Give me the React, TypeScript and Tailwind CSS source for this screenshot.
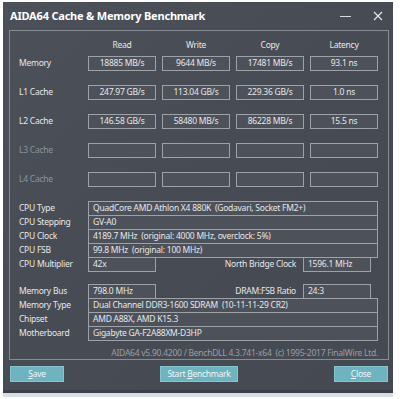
import React from 'react';

const font = "font-['Noto_Sans','Open_Sans',sans-serif]";

const benchRows = [
  { label: 'Memory', vals: ['18885 MB/s', '9644 MB/s', '17481 MB/s', '93.1 ns'] },
  { label: 'L1 Cache', vals: ['247.97 GB/s', '113.04 GB/s', '229.36 GB/s', '1.0 ns'] },
  { label: 'L2 Cache', vals: ['146.58 GB/s', '58480 MB/s', '86228 MB/s', '15.5 ns'] },
  { label: 'L3 Cache', vals: ['', '', '', ''], dim: true },
  { label: 'L4 Cache', vals: ['', '', '', ''], dim: true },
];

const cpuRows = [
  { label: 'CPU Type', value: 'QuadCore AMD Athlon X4 880K  (Godavari, Socket FM2+)' },
  { label: 'CPU Stepping', value: 'GV-A0' },
  { label: 'CPU Clock', value: '4189.7 MHz  (original: 4000 MHz, overclock: 5%)' },
  { label: 'CPU FSB', value: '99.8 MHz  (original: 100 MHz)' },
];

const memRows = [
  { label: 'Memory Type', value: 'Dual Channel DDR3-1600 SDRAM  (10-11-11-29 CR2)' },
  { label: 'Chipset', value: 'AMD A88X, AMD K15.3' },
  { label: 'Motherboard', value: 'Gigabyte GA-F2A88XM-D3HP' },
];

const Box = ({ children, className = '' }: { children?: React.ReactNode; className?: string }) => (
  <div
    className={`h-[15px] border border-[#9da1a8] bg-[#4d5159] flex items-center whitespace-pre leading-none ${className}`}
  >
    {children}
  </div>
);

const InfoRow = ({ label, value, first }: { label: string; value: string; first?: boolean }) => (
  <div className={`flex items-center ${first ? '' : '-mt-[1px]'}`}>
    <div className="w-[69px] leading-none">{label}</div>
    <Box className="w-[290px] px-[4px]">{value}</Box>
  </div>
);

const Button = ({ children, className = '' }: { children: React.ReactNode; className?: string }) => (
  <div
    className={`h-[16px] bg-[#6db4c0] border border-[#86c4ce] text-[#eef6f8] flex items-center justify-center leading-none ${className}`}
  >
    <span className="whitespace-pre">{children}</span>
  </div>
);

export default function App() {
  return (
    <div className={`w-[400px] h-[399px] bg-white overflow-hidden pt-[2px] pl-[3px] ${font}`}>
      <div className="w-[390px] h-[388px] bg-gradient-to-br from-[#4c5059] via-[#474b54] to-[#454951] text-[#e6e8ea] text-[8.5px] tracking-[-0.25px] flex flex-col">
        {/* Title bar */}
        <div className="h-[28px] flex items-center pl-[7px] pr-[10px]">
          <span className="text-[11px] font-bold text-white tracking-[-0.2px]">AIDA64 Cache &amp; Memory Benchmark</span>
          <div className="ml-auto flex items-center gap-[22px]">
            <div className="w-[11px] h-[1px] bg-[#d8dadd]" />
            <svg width="10" height="10" viewBox="0 0 10 10" stroke="#e4e6e8" strokeWidth="1.2">
              <path d="M1 1 9 9M9 1 1 9" />
            </svg>
          </div>
        </div>

        {/* Group box */}
        <div className="ml-[6px] w-[380px] h-[330px] border border-[#878b93] flex flex-col pl-[9px]">
          <div className="mt-[8px] h-[12px] grid grid-cols-[63px_68px_68px_68px_68px] gap-x-[6px] items-center text-center">
            <div />
            <div>Read</div>
            <div>Write</div>
            <div>Copy</div>
            <div>Latency</div>
          </div>

          <div className="mt-[5px] flex flex-col gap-[14px]">
            {benchRows.map((r) => (
              <div key={r.label} className="grid grid-cols-[63px_68px_68px_68px_68px] gap-x-[6px] items-center">
                <div className={`leading-none ${r.dim ? 'text-[#8c9697]' : ''}`}>{r.label}</div>
                {r.vals.map((v, i) => (
                  <Box key={i} className="justify-center">
                    {v}
                  </Box>
                ))}
              </div>
            ))}
          </div>

          <div className="mt-[14px] flex flex-col">
            {cpuRows.map((r, i) => (
              <InfoRow key={r.label} label={r.label} value={r.value} first={i === 0} />
            ))}
            <div className="flex items-center -mt-[1px]">
              <div className="w-[69px] leading-none">CPU Multiplier</div>
              <Box className="w-[68px] px-[4px]">42x</Box>
              <div className="w-[147px] text-right pr-[7px] leading-none">North Bridge Clock</div>
              <Box className="w-[68px] px-[4px]">1596.1 MHz</Box>
            </div>
          </div>

          <div className="mt-[12px] flex flex-col">
            <div className="flex items-center">
              <div className="w-[69px] leading-none">Memory Bus</div>
              <Box className="w-[68px] px-[4px]">798.0 MHz</Box>
              <div className="w-[147px] text-right pr-[7px] leading-none">DRAM:FSB Ratio</div>
              <Box className="w-[68px] px-[4px]">24:3</Box>
            </div>
            {memRows.map((r) => (
              <InfoRow key={r.label} label={r.label} value={r.value} />
            ))}
          </div>

          <div className="mt-[6px] h-[12px] w-[359px] text-right text-[#9a9ea6] leading-[12px] whitespace-pre">
            AIDA64 v5.90.4200 / BenchDLL 4.3.741-x64  (c) 1995-2017 FinalWire Ltd.
          </div>
        </div>

        {/* Buttons */}
        <div className="mt-[6px] flex items-center pl-[7px]">
          <Button className="w-[54px]">
            <span className="underline">S</span>ave
          </Button>
          <Button className="w-[78px] ml-[96px]">
            {'Start '}
            <span className="underline">B</span>enchmark
          </Button>
          <Button className="w-[54px] ml-[96px]">
            <span className="underline">C</span>lose
          </Button>
        </div>
      </div>
      <div className="w-[390px] h-[3px] bg-[#3a3f48]" />
      <div className="w-[390px] h-[4px] bg-[#d9dee4]" />
    </div>
  );
}
